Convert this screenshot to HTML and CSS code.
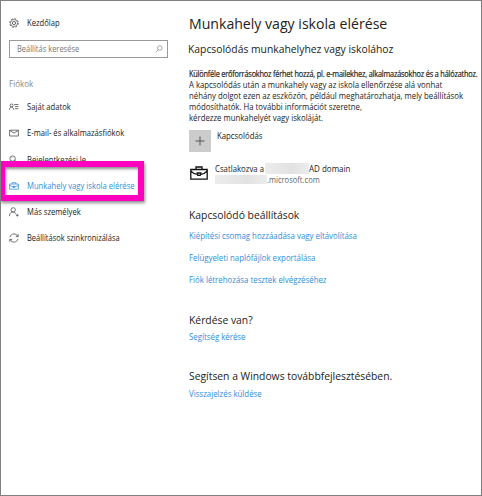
FILE: index.html
```html
<!DOCTYPE html>
<html lang="hu">
<head>
<meta charset="utf-8">
<title>Munkahely vagy iskola elérése</title>
<link rel="stylesheet" href="styles.css">
</head>
<body>
<div class="window">
  <nav class="sidebar">
    <a class="home"><svg class="icon" viewBox="0 0 10 10"><circle cx="5" cy="5" r="4.3" stroke-width=".9" stroke-dasharray="1.7 1.68"/><circle cx="5" cy="5" r="3.5" stroke-width=".6"/><circle cx="5" cy="5" r="1.6" stroke-width=".8"/></svg><span class="t-home">Kezdőlap</span></a>
    <div class="search"><span class="t-search">Beállítás keresése</span><svg class="lens" viewBox="0 0 8 8"><circle cx="4.8" cy="3" r="2.3"/><path d="M3.2 4.8L.7 7.3"/></svg></div>
    <div class="group"><span>Fiókok</span></div>
    <a class="item"><svg class="icon" viewBox="0 0 10 10"><circle cx="2.6" cy="3.5" r="1.5"/><path d="M.4 7.8C.6 4.3 4.6 4.3 4.8 7.8M5.2 2.5H9.4M6 4.6H9.4M6 6.7H9.4"/></svg><span class="t1">Saját adatok</span></a>
    <a class="item"><svg class="icon" viewBox="0 0 10 10"><path d="M.6 2.2H9.4V8H.6ZM.8 2.5L5 5.1L9.2 2.5"/></svg><span class="t2">E-mail- és alkalmazásfiókok</span></a>
    <a class="item"><svg class="icon" viewBox="0 0 10 10"><circle cx="3.6" cy="3.6" r="2.7"/><path d="M5.5 5.3L9.2 8.2V9.5H7.5L4.6 6.3M2.6 2.7H3.2"/></svg><span class="t3">Bejelentkezési le</span></a>
    <a class="item current"><svg class="icon" viewBox="0 0 10 10"><path d="M.6 3H9.4V8.2H.6ZM3.2 3V1.7H6.8V3M.6 4.3L3.6 5.7H6.4L9.4 4.3M4.2 5.2H5.8V6.5H4.2Z"/></svg><span class="t4">Munkahely vagy iskola elérése</span></a>
    <a class="item"><svg class="icon" viewBox="0 0 10 10"><circle cx="4.2" cy="2.9" r="2.2"/><path d="M.4 9.2C.7 4 6.3 4 6.8 7M7 8.3H9.6M8.3 7V9.6"/></svg><span class="t5">Más személyek</span></a>
    <a class="item"><svg class="icon" viewBox="0 0 10 10"><path d="M1 4.2C1.7.2 7.3-.3 8.7 3.4M9.2 1.2V3.6H6.8M9 5.8C8.3 9.8 2.7 10.3 1.3 6.6M.8 8.8V6.4H3.2"/></svg><span class="t6">Beállítások szinkronizálása</span></a>
    <div class="highlight"></div>
  </nav>
  <main class="content">
    <h1><span class="h-title">Munkahely vagy iskola elérése</span></h1>
    <h2 class="first"><span class="h-sub">Kapcsolódás munkahelyhez vagy iskolához</span></h2>
    <div class="intro">
      <div><span class="lead">Különféle erőforrásokhoz férhet hozzá, pl. e-mailekhez, alkalmazásokhoz és a hálózathoz.</span></div>
      <div><span class="b1">A kapcsolódás után a munkahely vagy az iskola ellenőrzése alá vonhat</span></div>
      <div><span class="b2">néhány dolgot ezen az eszközön, például meghatározhatja, mely beállítások</span></div>
      <div><span class="b3">módosíthatók. Ha további információt szeretne,</span></div>
      <div><span class="b4">kérdezze munkahelyét vagy iskoláját.</span></div>
    </div>
    <div class="connect"><svg class="plus" viewBox="0 0 22 22"><path d="M11 6.5V15.5M6.5 11H15.5"/></svg><span class="t-connect">Kapcsolódás</span></div>
    <div class="account">
      <svg class="case" viewBox="0 0 18 14"><path d="M.8 3.5H17.2V13.2H.8ZM6 3.3V1H12V3.3M1 5.2C3 7.6 5.2 8.2 7.3 8.3M17 5.2C15 7.6 12.8 8.2 10.7 8.3M7.3 7H10.7L10.2 9.4H7.8Z"/></svg>
      <div class="account-text">
        <div class="row"><span class="t-joined">Csatlakozva a</span><i class="mask m1"></i><span class="t-ad">AD domain</span></div>
        <div class="row"><i class="mask m2"></i><span class="t-ms">.microsoft.com</span></div>
      </div>
    </div>
    <section class="related">
      <h2><span>Kapcsolódó beállítások</span></h2>
      <a class="link"><span>Kiépítési csomag hozzáadása vagy eltávolítása</span></a>
      <a class="link"><span>Felügyeleti naplófájlok exportálása</span></a>
      <a class="link"><span>Fiók létrehozása tesztek elvégzéséhez</span></a>
    </section>
    <section class="question">
      <h2><span>Kérdése van?</span></h2>
      <a class="link near"><span>Segítség kérése</span></a>
    </section>
    <section class="feedback">
      <h2><span>Segítsen a Windows továbbfejlesztésében.</span></h2>
      <a class="link near"><span>Visszajelzés küldése</span></a>
    </section>
  </main>
</div>
</body>
</html>
```
FILE: styles.css
```css
* { box-sizing: border-box; }
body { margin: 0; background: #fff; font: 9px/12px "Open Sans", "Noto Sans", sans-serif; color: #222; }
.window { position: relative; width: 482px; height: 496px; border: 1px solid #808080; display: flex; overflow: hidden; white-space: nowrap; }
/* condensed lettering */
span { display: inline-block; vertical-align: top; transform: scaleX(.865); transform-origin: 0 50%; }
h1 span, h2 span { transform: scaleX(.94); }
.sidebar span { transform: scaleX(.85); }
.sidebar .t-search, .sidebar .t6 { transform: scaleX(.832); }
.sidebar .group span { transform: scaleX(.89); }
.sidebar { flex: none; width: 188px; padding: 12px 0 0 8px; }
.icon { width: 10px; height: 10px; margin-right: 8px; }
svg { fill: none; stroke: #444; stroke-width: .75; flex: none; }
.home { display: flex; align-items: center; height: 20px; }
.search { display: flex; align-items: center; justify-content: space-between; width: 159px; height: 18px; margin-top: 7px; padding: 0 4px 0 7px; border: 1px solid #999; color: #777; }
.lens { width: 8px; height: 8px; stroke: #888; }
.group { margin: 20px 0 4px; height: 12px; color: #888; }
.item { display: flex; align-items: center; height: 26.25px; }
.current { color: #2f8edb; }
.current svg { stroke: #2f8edb; }
.highlight { position: absolute; left: -1px; top: 160px; width: 144px; height: 40px; border: 6px solid #ff00c0; border-left-width: 5px; box-shadow: 1px 2px 3px rgba(0,0,0,.45), inset 1px 2px 3px rgba(0,0,0,.45); }
.content { flex: 1; min-width: 0; padding: 10px 0 0 .4px; }
h1, h2 { margin: 0; font-weight: 400; }
h1 { font-size: 15px; line-height: 24px; }
h2 { font-size: 11px; line-height: 16px; }
.first { margin: 6px 0 0 -1px; }
.intro { margin-top: 11px; line-height: 11px; }
.intro div { height: 11px; }
.intro .lead { -webkit-text-stroke: .2px #222; letter-spacing: -.22px; transform: scaleX(.813); }
.connect { display: flex; align-items: flex-start; margin-top: 7px; height: 22px; }
.plus { width: 22px; height: 22px; margin-right: 6px; background: #ccc; stroke: #555; stroke-width: 1; }
.account { display: flex; margin-top: 11px; height: 24px; }
.case { width: 18px; height: 14px; margin: 3px 7px 0 1px; stroke: #111; stroke-width: 1.3; }
.row { display: flex; height: 11px; line-height: 12px; }
.mask { flex: none; height: 11px; background: linear-gradient(90deg, #ececec, #e2e2e2 60%, #ececec); }
.t-joined { width: 50px; }
.m1 { width: 44px; }
.m2 { width: 52px; height: 9px; margin-top: 1px; }
.row .t-ad { transform: scaleX(.89); }
.row .t-ms { color: #666; transform: scaleX(.84); }
.related { margin-top: 20px; }
.link { display: block; height: 12px; margin-top: 10px; color: #2f8edb; }
.link span { transform: scaleX(.872); }
h2 + .link { margin-top: 7px; }
h2 + .near { margin-top: 3px; }
.question { margin-top: 26px; }
.feedback { margin-top: 25px; }
.feedback h2 + .near { margin-top: 4px; }
```
